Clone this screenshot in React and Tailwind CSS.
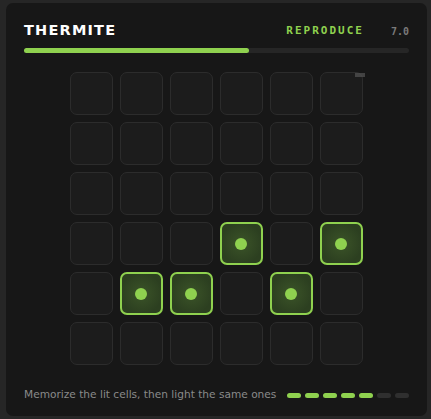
import React from 'react';

const lit = { '3-3': true, '3-5': true, '4-1': true, '4-2': true, '4-4': true };

function Cell({ on }) {
  if (on) {
    return (
      <div className="w-[43px] h-[43px] rounded-[7px] border-2 border-[#8fd14f] bg-[radial-gradient(circle,#3b5428_0%,#2c3f20_75%)] flex items-center justify-center">
        <div className="w-[12px] h-[12px] rounded-full bg-[#8fd14f]" />
      </div>
    );
  }
  return <div className="w-[43px] h-[43px] rounded-[7px] border border-[#2c2c2c] bg-[#1c1c1c]" />;
}

export default function App() {
  const rows = [0, 1, 2, 3, 4, 5];
  const pills = [1, 1, 1, 1, 1, 0, 0];
  return (
    <div className="w-[431px] h-[419px] bg-[#262626] pt-[3px] pl-[6px]">
      <div className="w-[421px] h-[413px] rounded-[7px] bg-[#171717] px-[18px] pt-[19px] flex flex-col">
        <div className="flex items-center h-[18px]">
          <div className="text-white font-bold text-[14.5px] tracking-[1.2px] font-['DejaVu_Sans',sans-serif]">THERMITE</div>
          <div className="ml-auto text-[#8fd14f] font-bold text-[11px] tracking-[2px] font-['DejaVu_Sans_Mono',monospace]">REPRODUCE</div>
          <div className="ml-[27px] text-[#7a7a7a] font-bold text-[10px] font-['DejaVu_Sans_Mono',monospace]">7.0</div>
        </div>
        <div className="mt-[8px] h-[5px] rounded-full bg-[#262626] w-full">
          <div className="h-full w-[225px] rounded-full bg-[#8fd14f]" />
        </div>
        <div className="relative mt-[19px] self-center ml-[-1px] grid grid-cols-6 gap-[7px]">
          {rows.map(r => rows.map(c => <Cell key={r + '-' + c} on={lit[r + '-' + c]} />))}
          <div className="absolute right-[-2px] top-[1px] w-[10px] h-[4px] bg-[#555] opacity-70" />
        </div>
        <div className="mt-auto mb-[13px] flex items-center">
          <div className="whitespace-nowrap text-[#8a8a8a] text-[10.6px] font-['DejaVu_Sans',sans-serif]">Memorize the lit cells, then light the same ones</div>
          <div className="ml-auto flex gap-[4px]">
            {pills.map((p, i) => (
              <div key={i} className={p ? 'w-[14px] h-[5px] rounded-full bg-[#8fd14f]' : 'w-[14px] h-[5px] rounded-full bg-[#2f2f2f]'} />
            ))}
          </div>
        </div>
      </div>
    </div>
  );
}
